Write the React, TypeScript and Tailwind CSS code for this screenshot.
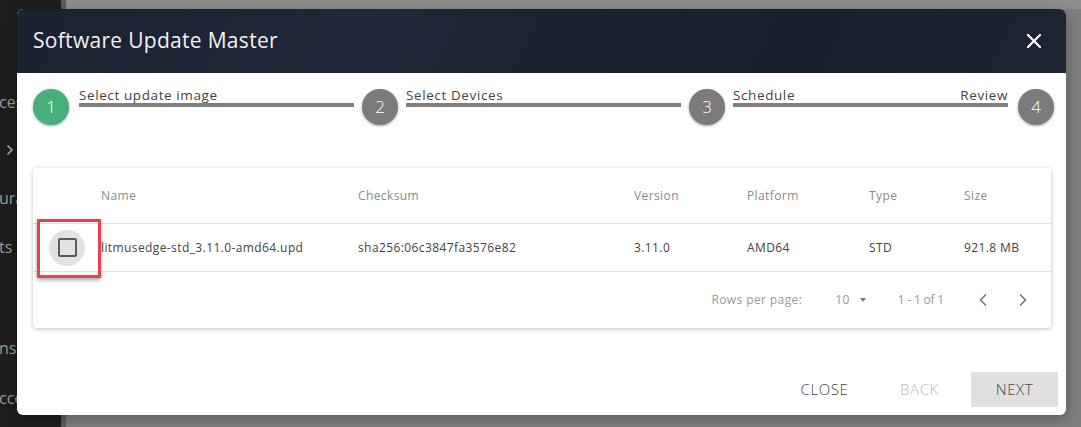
import React from 'react';
import { ChevronLeft, ChevronRight, X } from 'lucide-react';

const font = { fontFamily: '"Open Sans", "DejaVu Sans", sans-serif' };

const columns = ['Name', 'Checksum', 'Version', 'Platform', 'Type', 'Size'];
const row = ['litmusedge-std_3.11.0-amd64.upd', 'sha256:06c3847fa3576e82', '3.11.0', 'AMD64', 'STD', '921.8 MB'];

const StepCircle: React.FC<{ n: number; active?: boolean }> = ({ n, active }) => (
  <div
    className={`flex h-9 w-9 shrink-0 items-center justify-center rounded-full text-[17px] font-light text-white shadow-[0_1px_3px_rgba(0,0,0,0.35)] ${
      active ? 'bg-[#45b07c]' : 'bg-[#7b7b7b]'
    }`}
  >
    {n}
  </div>
);

const Connector: React.FC<{ left: string; right?: string }> = ({ left, right }) => (
  <div className="flex flex-1 flex-col">
    <div className="flex justify-between text-[13.5px] leading-[13px] tracking-[0.6px] text-[#444]">
      <span>{left}</span>
      {right && <span>{right}</span>}
    </div>
    <div className="mt-[1px] h-1 bg-[#808080]" />
  </div>
);

export default function App() {
  return (
    <div className="relative flex h-[427px] w-[1081px] overflow-hidden bg-[#858585]" style={font}>
      {/* page behind the dialog */}
      <div className="flex w-[61px] flex-col bg-[#1e1e1e] text-[16px] text-[#9c9c9c]">
        <div className="h-[92px]" />
        <span className="-ml-[1px] leading-5">ces</span>
        <ChevronRight className="ml-[2px] mt-[30px] h-4 w-4 text-[#b0b0b0]" strokeWidth={2.5} />
        <span className="-ml-[1px] mt-[30px] leading-5">ura</span>
        <span className="-ml-[1px] mt-[29px] leading-5">ts</span>
        <span className="-ml-[1px] mt-[81px] leading-5">ns</span>
        <span className="-ml-[1px] mt-[30px] leading-5">cce</span>
      </div>
      <div className="w-[5px] bg-[#5e5e5e]" />
      <div className="flex flex-1 flex-col">
        <div className="h-[9px] bg-[#8e8e8e]" />
        <div className="flex-1 bg-[#7f7f7f]" />
      </div>

      {/* dialog */}
      <div className="absolute left-[17px] top-[9px] flex h-[406px] w-[1049px] flex-col overflow-hidden rounded-[6px] bg-white shadow-[0_4px_16px_rgba(0,0,0,0.3)]">
        <div className="flex h-16 shrink-0 items-center justify-between bg-[linear-gradient(115deg,#1b2232_0%,#1f2738_35%,#1a2130_55%,#182030_75%,#1d2535_100%)] pl-4 pr-5">
          <h1 className="text-[21px] font-normal tracking-[0.3px] text-[#f2f2f2]">Software Update Master</h1>
          <X className="h-6 w-6 text-white" strokeWidth={2.2} />
        </div>

        <div className="mt-4 flex items-start gap-2 pl-4 pr-3">
          <StepCircle n={1} active />
          <div className="ml-[2px] flex flex-1"><Connector left="Select update image" /></div>
          <StepCircle n={2} />
          <Connector left="Select Devices" />
          <StepCircle n={3} />
          <div className="mr-[2px] flex flex-1"><Connector left="Schedule" right="Review" /></div>
          <StepCircle n={4} />
        </div>

        <div className="relative ml-4 mr-[15px] mt-[43px] rounded-[4px] bg-white shadow-[0_1px_4px_rgba(0,0,0,0.25)]">
          <div className="grid h-14 grid-cols-[68px_257px_276px_113px_122px_95px_1fr] items-center border-b border-[#e0e0e0] text-[12px] tracking-[0.4px] text-[#8a8a8a]">
            <div />
            {columns.map((c) => (
              <div key={c}>{c}</div>
            ))}
          </div>
          <div className="grid h-12 grid-cols-[68px_257px_276px_113px_122px_95px_1fr] items-center border-b border-[#e0e0e0] text-[12px] tracking-[0.4px] text-[#444]">
            <div className="flex justify-center">
              <div className="flex h-9 w-9 items-center justify-center rounded-full bg-[#e2e2e2]">
                <div className="h-[19px] w-[19px] rounded-[2px] border-2 border-[#5a5a5a]" />
              </div>
            </div>
            {row.map((c) => (
              <div key={c}>{c}</div>
            ))}
          </div>
          <div className="flex h-14 items-center justify-end pr-[18px] text-[12px] tracking-[0.4px] text-[#999]">
            <span>Rows per page:</span>
            <span className="ml-[33px] text-[#999]">10</span>
            <span className="ml-[10px] h-0 w-0 border-x-[3px] border-t-[4px] border-x-transparent border-t-[#777]" />
            <span className="ml-[32px] tracking-[-0.2px]">1 - 1 of 1</span>
            <ChevronLeft className="ml-[29px] h-5 w-5 text-[#777]" strokeWidth={2} />
            <ChevronRight className="ml-[20px] h-5 w-5 text-[#777]" strokeWidth={2} />
          </div>
          <div className="absolute left-[4px] top-[51px] h-[59px] w-[64px] border-[3px] border-[#e3434f] shadow-[0_2px_4px_rgba(0,0,0,0.35)]" />
        </div>

        <div className="mt-auto mb-2 flex justify-end gap-2 pr-2">
          <button className="h-[35px] w-[87px] text-[15px] font-light tracking-[0.6px] text-[#444]">CLOSE</button>
          <button className="h-[35px] w-[87px] text-[15px] font-light tracking-[0.6px] text-[#bbb]">BACK</button>
          <button className="h-[35px] w-[87px] bg-[#e0e0e0] text-[15px] font-light tracking-[0.6px] text-[#444]">NEXT</button>
        </div>
      </div>
    </div>
  );
}
